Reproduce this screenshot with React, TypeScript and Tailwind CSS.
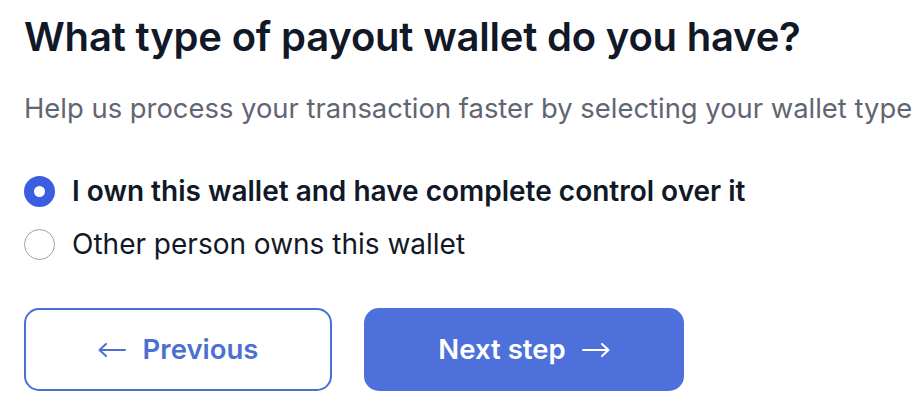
import React from "react";

function ArrowLeft() {
  return (
    <svg width="28" height="14" viewBox="0 0 28 14" fill="none" stroke="currentColor" strokeWidth="2" strokeLinecap="round" strokeLinejoin="round">
      <path d="M27 7H1.5M8 1L1.5 7L8 13" />
    </svg>
  );
}

function ArrowRight() {
  return (
    <svg width="28" height="14" viewBox="0 0 28 14" fill="none" stroke="currentColor" strokeWidth="2" strokeLinecap="round" strokeLinejoin="round">
      <path d="M1 7H26.5M20 1L26.5 7L20 13" />
    </svg>
  );
}

export default function App() {
  return (
    <div
      className="w-[924px] h-[418px] bg-white pl-[24px] pt-[13px] overflow-hidden"
      style={{ fontFamily: "Inter, 'Liberation Sans', sans-serif" }}
    >
      <h1 className="text-[40px] leading-[48px] font-semibold text-[#111827] tracking-[-0.2px] whitespace-nowrap">
        What type of payout wallet do you have?
      </h1>
      <p className="mt-[29px] text-[27.4px] leading-[36px] text-[#5f6672] whitespace-nowrap">
        Help us process your transaction faster by selecting your wallet type
      </p>
      <div className="mt-[49px] flex flex-col gap-[21px]">
        <div className="flex items-center h-[32px] gap-[17px]">
          <span className="w-[31px] h-[31px] rounded-full border-[10.5px] border-[#3b5ee0] bg-white shrink-0" />
          <span className="text-[28px] leading-[32px] font-semibold text-[#111827] whitespace-nowrap">
            I own this wallet and have complete control over it
          </span>
        </div>
        <div className="flex items-center h-[32px] gap-[17px]">
          <span className="w-[31px] h-[31px] rounded-full border-[1.5px] border-[#9ca3af] bg-white shrink-0" />
          <span className="text-[28px] leading-[32px] text-[#111827] whitespace-nowrap">
            Other person owns this wallet
          </span>
        </div>
      </div>
      <div className="mt-[48px] flex gap-[32px]">
        <button className="w-[308px] h-[83px] rounded-[15px] border-2 border-[#4c6fd2] bg-white text-[#4c6fd2] flex items-center justify-center gap-[17px] text-[27.5px] font-semibold">
          <ArrowLeft />
          <span>Previous</span>
        </button>
        <button className="w-[320px] h-[83px] rounded-[15px] bg-[#4d70da] text-white flex items-center justify-center gap-[16px] text-[27.5px] font-semibold">
          <span>Next step</span>
          <ArrowRight />
        </button>
      </div>
    </div>
  );
}
